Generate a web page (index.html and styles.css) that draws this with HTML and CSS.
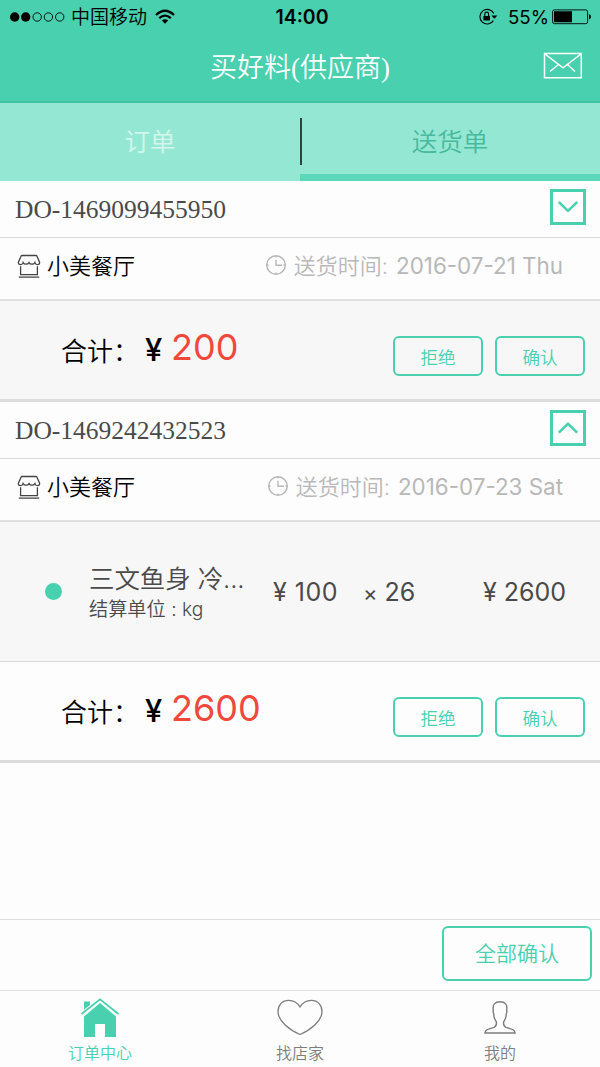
FILE: index.html
```html
<!DOCTYPE html>
<html lang="zh-CN">
<head>
<meta charset="utf-8">
<title>买好料(供应商)</title>
<link rel="stylesheet" href="styles.css">
</head>
<body>
<svg class="defs" width="0" height="0">
  <symbol id="shop" viewBox="0 0 24 24">
    <path d="M5.2 1.5H18.8Q19.8 1.5 20.1 2.4L22.6 8.2Q22.8 10.6 20.5 10.6Q18.4 10.6 17.9 8.6Q17 10.2 15 10.2Q12.8 10.2 12 8.6Q11.2 10.2 9 10.2Q7 10.2 6.1 8.6Q5.6 10.6 3.5 10.6Q1.2 10.6 1.4 8.2L3.9 2.4Q4.2 1.5 5.2 1.5ZM3.6 12.2V20.6H20.4V12.2M1.8 23.2H22.2" fill="none" stroke="#444" stroke-width="1.3"/>
  </symbol>
  <symbol id="clock" viewBox="0 0 22 22">
    <circle cx="11" cy="11" r="9.3" fill="none" stroke="#b8b8b8" stroke-width="1.5"/>
    <path d="M11 5.8V11.2H17M11 2V3.6M11 18.4V20M2 11H3.6M18.4 11H20" fill="none" stroke="#b8b8b8" stroke-width="1.4"/>
  </symbol>
</svg>
<div class="screen">
  <header class="header">
    <div class="status">
      <svg class="signal" width="56" height="12" viewBox="0 0 56 12">
        <circle cx="5.7" cy="6" r="4.7"/><circle cx="16.7" cy="6" r="4.7"/>
        <g fill="none" stroke="#000" stroke-width=".9"><circle cx="28.2" cy="6" r="4.2"/><circle cx="39.4" cy="6" r="4.2"/><circle cx="50.7" cy="6" r="4.2"/></g>
      </svg>
      <span class="carrier">中国移动</span>
      <svg class="wifi" width="20" height="16" viewBox="0 0 20 16">
        <path d="M1 6Q10-2.4 19 6M4.2 9.2Q10 4 15.8 9.2" fill="none" stroke="#000" stroke-width="2.3"/>
        <path d="M6.8 11.5Q10 8.8 13.2 11.5L10 14.8Z"/>
      </svg>
      <span class="time">14:00</span>
      <svg class="lock" width="20" height="18" viewBox="0 0 20 18">
        <path d="M15.8 5.6A7.3 7.3 0 1 0 15.4 12.6" fill="none" stroke="#000" stroke-width="1.1"/>
        <path d="M13.4 7.4H19.4L16.4 10.8ZM5.4 7.9H12V12.6H5.4Z"/>
        <path d="M6.8 8V6A1.9 1.9 0 0 1 10.6 6V8" fill="none" stroke="#000" stroke-width="1.1"/>
      </svg>
      <span class="percent">55%</span>
      <svg class="battery" width="40" height="16" viewBox="0 0 40 16">
        <rect x=".6" y=".9" width="35" height="13.8" rx="1.8" fill="none" stroke="#000" stroke-width=".9"/>
        <path d="M2 2.3H20V13.3H2ZM37 5.3Q39 5.5 39 7.8Q39 10.1 37 10.4Z"/>
      </svg>
    </div>
    <div class="titlebar">
      <h1 class="title">买好料(供应商)</h1>
      <svg class="mail" width="40" height="28" viewBox="0 0 40 28">
        <path d="M1.5 1.5H38.3V25.8H1.5ZM2 2L20 15.8L38 2M15.5 12.5L7 19.5M24.5 12.5L32 19.5" fill="none" stroke="#fff" stroke-width="1.5"/>
      </svg>
    </div>
  </header>
  <nav class="tabs">
    <div class="tab">订单</div>
    <div class="divider"></div>
    <div class="tab active">送货单</div>
  </nav>
  <main class="orders">
    <section class="order">
      <div class="order-head"><span class="order-no">DO-1469099455950</span>
        <span class="toggle"><svg width="22" height="14" viewBox="0 0 22 14"><path d="M1.8 2L11 10.8L20.2 2" fill="none" stroke="#48d0af" stroke-width="2.5"/></svg></span></div>
      <div class="order-shop"><svg class="shop-icon"><use href="#shop"/></svg><span class="shop-name">小美餐厅</span>
        <span class="delivery"><svg class="clock-icon"><use href="#clock"/></svg><span class="label">送货时间:</span><span class="date">2016-07-21 Thu</span></span></div>
      <div class="total shaded"><span class="total-label">合计：</span><span class="yen">¥</span><span class="amount">200</span>
        <div class="actions"><button class="btn">拒绝</button><button class="btn">确认</button></div></div>
    </section>
    <section class="order">
      <div class="order-head"><span class="order-no">DO-1469242432523</span>
        <span class="toggle"><svg width="22" height="14" viewBox="0 0 22 14"><path d="M1.8 11.6L11 2.8L20.2 11.6" fill="none" stroke="#48d0af" stroke-width="2.5"/></svg></span></div>
      <div class="order-shop"><svg class="shop-icon"><use href="#shop"/></svg><span class="shop-name">小美餐厅</span>
        <span class="delivery"><svg class="clock-icon"><use href="#clock"/></svg><span class="label">送货时间:</span><span class="date">2016-07-23 Sat</span></span></div>
      <div class="item">
        <span class="dot"></span>
        <div class="item-info"><div class="item-name">三文鱼身 冷...</div><div class="item-unit">结算单位 : kg</div></div>
        <span class="price">¥ 100</span><span class="qty"><span class="times">×</span> 26</span><span class="sum">¥ 2600</span>
      </div>
      <div class="total"><span class="total-label">合计：</span><span class="yen">¥</span><span class="amount">2600</span>
        <div class="actions"><button class="btn">拒绝</button><button class="btn">确认</button></div></div>
    </section>
  </main>
  <div class="confirm-bar"><button class="confirm-all">全部确认</button></div>
  <footer class="tabbar">
    <div class="nav current">
      <svg width="40" height="40" viewBox="0 0 40 40"><path d="M4 18.5L20 5L36 18.5V39H25V26H15V39H4Z" fill="#48d0af"/><path d="M4 3.5H10V9L4 14Z" fill="#48d0af"/><path d="M1.5 16.3L20 1.5L38.5 16.3" fill="none" stroke="#fdfdfd" stroke-width="4"/><path d="M1.5 16L20 1.3L38.5 16" fill="none" stroke="#48d0af" stroke-width="1.7"/></svg>
      <span>订单中心</span></div>
    <div class="nav">
      <svg width="48" height="40" viewBox="0 0 48 40"><path d="M24 9C21 4 17 2.3 12.7 2.3C6 2.3 2 7.3 2 13.5C2 23 14 32.5 24 36.5C34 32.5 46 23 46 13.5C46 7.3 42 2.3 35.3 2.3C31 2.3 27 4 24 9Z" fill="none" stroke="#7d7d7d" stroke-width="1.3"/></svg>
      <span>找店家</span></div>
    <div class="nav">
      <svg width="40" height="40" viewBox="0 0 40 40"><path d="M4.9 35H35.1Q34.8 31.9 30.8 30.8L26 29.3Q23.2 28.3 23.6 24Q26.2 20.4 26.2 16.3Q27.2 14 26.7 12Q28 3.8 20 3.8Q12 3.8 13.3 12Q12.8 14 13.8 16.3Q13.8 20.4 16.4 24Q16.8 28.3 14 29.3L9.2 30.8Q5.2 31.9 4.9 35Z" fill="none" stroke="#7d7d7d" stroke-width="1.4"/></svg>
      <span>我的</span></div>
  </footer>
</div>
</body>
</html>
```
FILE: styles.css
```css
* { box-sizing: border-box; }
body { margin: 0; font-family: Inter, "Noto Sans CJK SC", sans-serif; font-weight: 400; color: #000; background: #fdfdfd; }
svg { display: block; flex: none; }
.defs { position: absolute; }
.screen { width: 600px; height: 1067px; display: flex; flex-direction: column; overflow: hidden; }
span, h1 { white-space: nowrap; }

.header { height: 103px; background: #48d0af; border-bottom: 2px solid #40c4a3; }
.status { height: 33px; display: grid; grid-template-columns: 61px 84px 110px 90px 133px 30px 44px 48px; align-items: center; }
.signal { margin-left: 9px; }
.carrier { padding-left: 10px; font-size: 19px; font-weight: 350; line-height: 32px; padding-top: 2px; }
.wifi { margin-left: 10px; }
.time { text-align: center; font-size: 19.5px; font-weight: 600; margin-left: 4px; }
.lock { justify-self: end; margin-right: -20px; }
.percent { grid-column: 6 / 8; padding-left: 30px; font-size: 18.7px; }
.titlebar { height: 68px; display: grid; grid-template-columns: 1fr 40px; align-items: center; padding: 0 17px 3px 57px; }
.title { margin: 0; padding-top: 5px; text-align: center; color: #fff; font: 350 27px/40px "Liberation Serif", "Noto Sans CJK SC", serif; }

.tabs { height: 78px; display: flex; background: #94e8d3; }
.tab { flex: 1; display: flex; justify-content: center; font-size: 25.5px; font-weight: 350; line-height: 77px; color: #d4f7ed; }
.tab.active { color: #48b99c; border-bottom: 7px solid #5bd8b9; }
.divider { width: 2px; height: 47px; margin: 15px -2px 0 0; background: #30443f; z-index: 1; }

.order { border-bottom: 3px solid #dcdcdc; }
.order-head { height: 57px; border-bottom: 1px solid #dadada; display: flex; justify-content: space-between; align-items: center; padding: 0 14px 0 15px; }
.order-no { font-family: "Liberation Serif", serif; font-size: 25.5px; color: #4a4a4a; padding-top: 1px; }
.toggle { width: 36px; height: 36px; border: 3px solid #48d0af; display: grid; place-items: center; margin-top: -4px; }
.order-shop { height: 63px; border-bottom: 2px solid #e0e0e0; display: flex; align-items: center; padding: 0 37px 6px 17px; }
.shop-icon { width: 24px; height: 24px; }
.shop-name { font-size: 22px; font-weight: 350; margin-left: 6px; line-height: 32px; }
.delivery { margin-left: auto; display: flex; align-items: center; color: #b8b8b8; font-size: 22.4px; line-height: 32px; }
.clock-icon { width: 22px; height: 22px; margin: -2px 7px 0 0; }
.label { font-weight: 350; font-size: 22px; margin-right: 8px; }
.total { height: 98px; display: flex; align-items: flex-start; padding: 0 15px 0 61px; background: #fdfdfd; }
.shaded { background: #f7f7f7; }
.total-label { width: 84px; font-size: 26px; font-weight: 350; line-height: 38px; margin-top: 32px; }
.yen { width: 26px; font-size: 31px; font-weight: 500; line-height: 36px; margin-top: 31px; }
.amount { color: #f0493c; font-size: 36px; line-height: 44px; margin-top: 24px; }
.actions { margin: 35px 0 0 auto; display: flex; gap: 12px; }
.btn, .confirm-all { background: #fdfdfd; color: #48d0af; border: 2px solid #48d0af; border-radius: 6px; font-family: inherit; font-weight: 350; padding: 0; }
.btn { width: 90px; height: 40px; font-size: 17.5px; background: transparent; }
.item { height: 140px; background: #f7f7f7; border-bottom: 1px solid #d8d8d8; display: grid; grid-template-columns: 44px 184px 90px 120px 1fr; align-items: center; padding-left: 45px; color: #4a4a4a; font-size: 25px; }
.dot { width: 17px; height: 17px; border-radius: 50%; background: #48d0af; }
.item-name { white-space: nowrap; font-size: 25.5px; font-weight: 350; line-height: 34px; letter-spacing: -.1px; }
.item-unit { font-size: 19.2px; font-weight: 350; line-height: 26px; }
.price { letter-spacing: .5px; }
.times { font-size: 22px; }

.confirm-bar { margin-top: auto; height: 71px; border-top: 1px solid #dedede; display: flex; justify-content: flex-end; align-items: flex-start; padding: 6px 8px; }
.confirm-all { width: 150px; height: 55px; font-size: 21px; padding-bottom: 4px; }
.tabbar { height: 77px; border-top: 1px solid #dedede; display: flex; }
.nav { width: 200px; display: flex; flex-direction: column; align-items: center; padding-top: 7px; color: #7d7d7d; font-size: 16px; font-weight: 350; line-height: 31px; }
.current { color: #48d0af; }
```
